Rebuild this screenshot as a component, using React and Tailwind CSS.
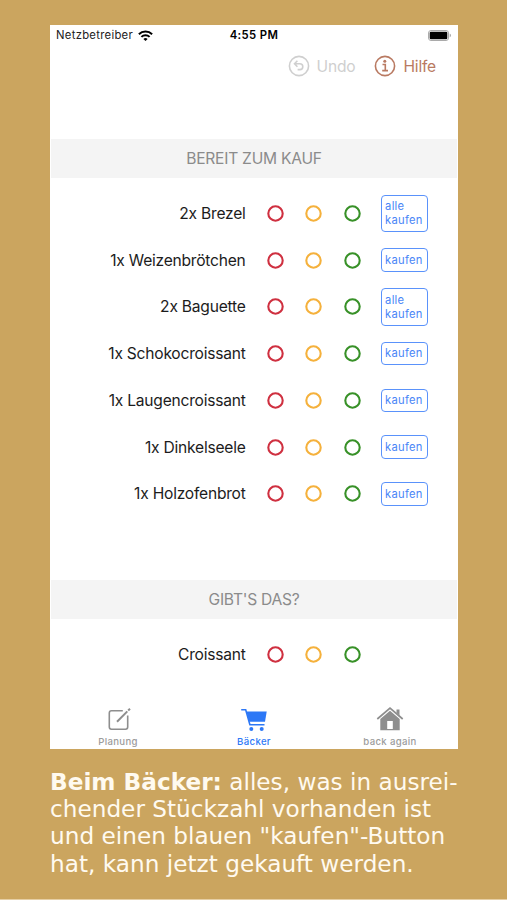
const readyItems = [
    { name: "2x Brezel", multiple: true },
    { name: "1x Weizenbrötchen", multiple: false },
    { name: "2x Baguette", multiple: true },
    { name: "1x Schokocroissant", multiple: false },
    { name: "1x Laugencroissant", multiple: false },
    { name: "1x Dinkelseele", multiple: false },
    { name: "1x Holzofenbrot", multiple: false },
];

function Circle({ color }) {
    return (
        <svg className={`size-[17px] ${color}`} viewBox="0 0 17 17" fill="none">
            <circle cx="8.5" cy="8.5" r="7.2" stroke="currentColor" strokeWidth="2.1" />
        </svg>
    );
}

function SectionTitle({ children }) {
    return (
        <h2 className="mx-px h-[39px] shrink-0 bg-[#f4f4f4] text-center text-[15.6px] leading-[39px] tracking-[-0.25px] text-[#8b8b8b]">
            {children}
        </h2>
    );
}

function ItemRow({ name, action }) {
    return (
        <li className="flex h-[46.75px] items-center">
            <span className="w-[195.6px] text-right text-[15.6px] tracking-[-0.23px] whitespace-nowrap text-[#1c1c1c]">
                {name}
            </span>
            <div className="ml-[21px] flex gap-[21.5px]">
                <Circle color="text-[#cf3040]" />
                <Circle color="text-[#f5b13c]" />
                <Circle color="text-[#389128]" />
            </div>
            {action}
        </li>
    );
}

function BuyButton({ multiple }) {
    return (
        <button className="ml-5 w-[47px] rounded-[4px] border-[1.3px] border-[#5a92fb] pt-[3.5px] pb-[4px] pl-[3.5px] text-left text-[11.2px] leading-[14px] tracking-[0.25px] text-[#4a86f7]">
            {multiple && <span className="block">alle</span>}
            <span className="block">kaufen</span>
        </button>
    );
}

function StatusBar() {
    return (
        <div className="flex h-5 items-center px-[6px] text-[11.3px] text-[#222]">
            <div className="flex flex-1 items-center gap-[5px]">
                <span className="tracking-[0.28px]">Netzbetreiber</span>
                <svg className="h-[11px] w-[15px]" viewBox="0 0 15 11" fill="none" stroke="#000" strokeWidth="2">
                    <path d="M0.9 4.2a9.4 9.4 0 0 1 13.2 0" />
                    <path d="M3.4 6.9a5.8 5.8 0 0 1 8.2 0" />
                    <path d="M5.4 9a3 3 0 0 1 4.2 0L7.5 11z" fill="#000" stroke="none" />
                </svg>
            </div>
            <span className="font-semibold tracking-[0.4px] text-black">4:55 PM</span>
            <div className="flex flex-1 justify-end">
                <svg className="h-[11px] w-[24px]" viewBox="0 0 24 11">
                    <rect x="0.5" y="0.5" width="20" height="10" rx="2.5" fill="#fff" stroke="#aaa" />
                    <rect x="1.7" y="1.7" width="17.6" height="7.6" rx="1.3" fill="#000" />
                    <path d="M21.7 3.6c1.8.5 1.8 3.3 0 3.8z" fill="#aaa" />
                </svg>
            </div>
        </div>
    );
}

function Toolbar() {
    return (
        <div className="flex h-[43px] items-center justify-end pr-[22px] text-[15.6px] tracking-[-0.2px]">
            <button className="flex items-center gap-[7px] text-[#cfcfcf]">
                <svg className="size-[22px]" viewBox="0 0 22 22" fill="none" stroke="currentColor" strokeWidth="1.6">
                    <circle cx="11" cy="11" r="9.6" />
                    <path d="M9.4 5.8 6.5 8.8l2.9 3M6.7 8.8h5.2a2.9 2.9 0 0 1 0 5.8h-2.3" />
                </svg>
                <span>Undo</span>
            </button>
            <button className="ml-[19px] flex items-center gap-[7px] text-[#b97a62]">
                <svg className="size-[22px]" viewBox="0 0 22 22" fill="none" stroke="currentColor" strokeWidth="1.6">
                    <circle cx="11" cy="11" r="9.6" />
                    <circle cx="10.8" cy="6.3" r="1.5" fill="currentColor" stroke="none" />
                    <path d="M8.5 9.5h2.8v6M8.2 15.6h5.8" />
                </svg>
                <span>Hilfe</span>
            </button>
        </div>
    );
}

function TabBar() {
    return (
        <nav className="grid h-[46px] grid-cols-3 text-[9.6px] leading-[13px] font-medium tracking-[0.35px] text-[#9c9c9c]">
            <a className="flex flex-col items-center">
                <svg className="ml-[2px] h-[32px] w-[28px]" viewBox="0 0 28 32" fill="none" stroke="#8e8e8e" strokeWidth="1.6">
                    <path d="M17.8 7.8H6.5a2.2 2.2 0 0 0-2.2 2.2v14a2.2 2.2 0 0 0 2.2 2.2h14a2.2 2.2 0 0 0 2.2-2.2V12.5" />
                    <path d="m12 18.7 10.3-10.3M23.2 7.5l1.8-1.8" strokeWidth="2" />
                </svg>
                <span>Planung</span>
            </a>
            <a className="flex flex-col items-center text-[#2d78f6]">
                <svg className="h-[32px] w-[28px]" viewBox="0 0 28 32" fill="none">
                    <path d="M1.2 6.8h4.5l4.2 15h14.6" stroke="currentColor" strokeWidth="1.6" />
                    <path d="M6.4 8.5h20.3l-1.7 10.2H9.2z" fill="currentColor" />
                    <circle cx="11.3" cy="26" r="2" fill="currentColor" />
                    <circle cx="21.7" cy="26" r="2" fill="currentColor" />
                </svg>
                <span>Bäcker</span>
            </a>
            <a className="flex flex-col items-center">
                <svg className="h-[32px] w-[28px]" viewBox="0 0 28 32" fill="none">
                    <path d="M1.3 16 14 5l12.7 11" stroke="#8e8e8e" strokeWidth="1.7" />
                    <path d="M20.5 6.5h3v6.2l-3-2.6z" fill="#8e8e8e" />
                    <path d="M4.3 16 14 7.7l9.7 8.3v11.3H4.3zM11.2 18v8h5.6v-8z" fill="#8e8e8e" fillRule="evenodd" />
                </svg>
                <span>back again</span>
            </a>
        </nav>
    );
}

export default function App() {
    return (
        <div className="h-[900px] w-[507px] overflow-hidden border-b border-[#e6cfa5] bg-[#cba55f] pt-[25px] pl-[50px]">
            <main className="flex h-[724px] w-[408px] flex-col bg-white font-[Inter,sans-serif]">
                <StatusBar />
                <Toolbar />
                <div className="flex flex-1 flex-col pt-[51px]">
                    <SectionTitle>BEREIT ZUM KAUF</SectionTitle>
                    <ul className="mt-[12.1px]">
                        {readyItems.map((item) => (
                            <ItemRow
                                key={item.name}
                                name={item.name}
                                action={<BuyButton multiple={item.multiple} />}
                            />
                        ))}
                    </ul>
                    <div className="mt-[63px] flex flex-col">
                        <SectionTitle>GIBT'S DAS?</SectionTitle>
                        <ul className="mt-[12.1px]">
                            <ItemRow name="Croissant" />
                        </ul>
                    </div>
                </div>
                <TabBar />
            </main>
            <p className="mt-[19px] text-[23.2px] leading-[27.2px] whitespace-nowrap text-[#fffaf0] font-['DejaVu_Sans',sans-serif]">
                <b>Beim Bäcker:</b> alles, was in ausrei-
                <br />
                chender Stückzahl vorhanden ist
                <br />
                und einen blauen "kaufen"-Button
                <br />
                hat, kann jetzt gekauft werden.
            </p>
        </div>
    );
}
